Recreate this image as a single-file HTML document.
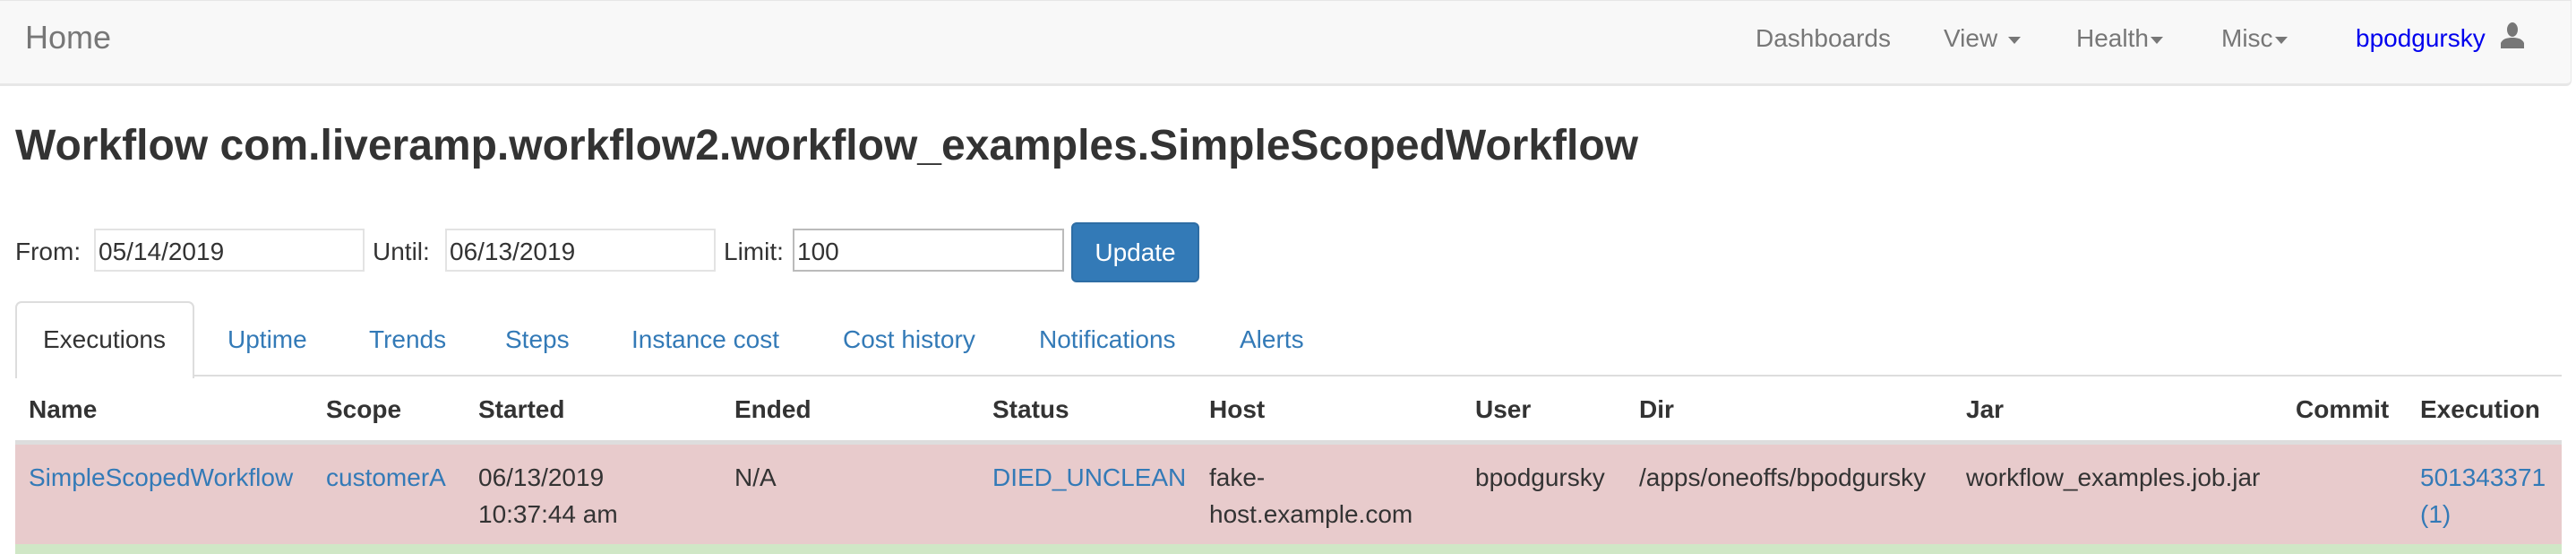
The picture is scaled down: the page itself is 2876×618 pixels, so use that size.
<!DOCTYPE html>
<html><head><meta charset="utf-8"><style>
body{margin:0;width:2876px;height:618px;overflow:hidden;background:#fff;font-family:"Liberation Sans",Helvetica,Arial,sans-serif;font-size:28px;color:#333;position:relative}
.a{position:absolute;white-space:nowrap;line-height:1}
.nav{position:absolute;left:0;top:0;width:2870px;height:92px;background:#f8f8f8;border:1px solid #e7e7e7;border-left:none;border-bottom:3px solid #e7e7e7;border-radius:0 0 6px 0}
.n{color:#777}
.l{color:#337ab7}
.in{position:absolute;height:48px;border:2px solid #e3e3e3;box-sizing:border-box;background:#fff}
.car{display:inline-block;width:0;height:0;border-left:7px solid transparent;border-right:7px solid transparent;border-top:8px solid #777;vertical-align:middle;margin-left:8px}
b{font-weight:bold}
</style></head><body>
<div class="nav"></div>
<div class="a n" style="left:28px;top:24px;font-size:36px">Home</div>
<div class="a n" style="left:1960px;top:29px">Dashboards</div>
<div class="a n" style="left:2170px;top:29px">View<span class="car" style="margin-left:12px"></span></div>
<div class="a n" style="left:2318px;top:29px">Health<span class="car" style="margin-left:2px"></span></div>
<div class="a n" style="left:2480px;top:29px">Misc<span class="car" style="margin-left:2px"></span></div>
<div class="a" style="left:2630px;top:29px;color:#0000ee">bpodgursky</div>
<svg class="a" style="left:2791px;top:24px" width="28" height="30" viewBox="0 0 28 30"><ellipse cx="14" cy="9" rx="6" ry="8" fill="#777"/><path d="M1 30 L1 24 C3 19 9 18 14 18 C19 18 25 19 27 24 L27 30Z" fill="#777"/></svg>

<div class="a" style="left:17px;top:139px;font-size:48px;font-weight:bold">Workflow com.liveramp.workflow2.workflow_examples.SimpleScopedWorkflow</div>

<div class="a" style="left:17px;top:267px">From:</div>
<div class="in" style="left:105px;top:255px;width:302px"></div>
<div class="a" style="left:110px;top:267px">05/14/2019</div>
<div class="a" style="left:416px;top:267px">Until:</div>
<div class="in" style="left:497px;top:255px;width:302px"></div>
<div class="a" style="left:502px;top:267px">06/13/2019</div>
<div class="a" style="left:808px;top:267px">Limit:</div>
<div class="in" style="left:885px;top:255px;width:303px;border-color:#bbb"></div>
<div class="a" style="left:890px;top:267px">100</div>
<div class="a" style="left:1196px;top:248px;width:143px;height:67px;background:#337ab7;border:2px solid #2e6da4;box-sizing:border-box;border-radius:6px;color:#fff;text-align:center;line-height:63px">Update</div>

<div class="a" style="left:17px;top:418px;width:2843px;height:2px;background:#ddd"></div>
<div class="a" style="left:17px;top:336px;width:200px;height:86px;background:#fff;border:2px solid #ddd;border-bottom:none;box-sizing:border-box;border-radius:7px 7px 0 0"></div>
<div class="a" style="left:48px;top:365px">Executions</div>
<div class="a l" style="left:254px;top:365px">Uptime</div>
<div class="a l" style="left:412px;top:365px">Trends</div>
<div class="a l" style="left:564px;top:365px">Steps</div>
<div class="a l" style="left:705px;top:365px">Instance cost</div>
<div class="a l" style="left:941px;top:365px">Cost history</div>
<div class="a l" style="left:1160px;top:365px">Notifications</div>
<div class="a l" style="left:1384px;top:365px">Alerts</div>

<div class="a" style="left:17px;top:491px;width:2843px;height:5px;background:#ddd"></div>
<div class="a" style="left:17px;top:496px;width:2843px;height:111px;background:#e8cbcc"></div>
<div class="a" style="left:17px;top:607px;width:2843px;height:11px;background:#d0e7c6"></div>

<b class="a" style="left:32px;top:443px">Name</b>
<b class="a" style="left:364px;top:443px">Scope</b>
<b class="a" style="left:534px;top:443px">Started</b>
<b class="a" style="left:820px;top:443px">Ended</b>
<b class="a" style="left:1108px;top:443px">Status</b>
<b class="a" style="left:1350px;top:443px">Host</b>
<b class="a" style="left:1647px;top:443px">User</b>
<b class="a" style="left:1830px;top:443px">Dir</b>
<b class="a" style="left:2195px;top:443px">Jar</b>
<b class="a" style="left:2563px;top:443px">Commit</b>
<b class="a" style="left:2702px;top:443px">Execution</b>

<div class="a l" style="left:32px;top:519px">SimpleScopedWorkflow</div>
<div class="a l" style="left:364px;top:519px">customerA</div>
<div class="a" style="left:534px;top:519px">06/13/2019</div>
<div class="a" style="left:534px;top:560px">10:37:44 am</div>
<div class="a" style="left:820px;top:519px">N/A</div>
<div class="a l" style="left:1108px;top:519px">DIED_UNCLEAN</div>
<div class="a" style="left:1350px;top:519px">fake-</div>
<div class="a" style="left:1350px;top:560px">host.example.com</div>
<div class="a" style="left:1647px;top:519px">bpodgursky</div>
<div class="a" style="left:1830px;top:519px">/apps/oneoffs/bpodgursky</div>
<div class="a" style="left:2195px;top:519px">workflow_examples.job.jar</div>
<div class="a l" style="left:2702px;top:519px">501343371</div>
<div class="a l" style="left:2702px;top:560px">(1)</div>
</body></html>
